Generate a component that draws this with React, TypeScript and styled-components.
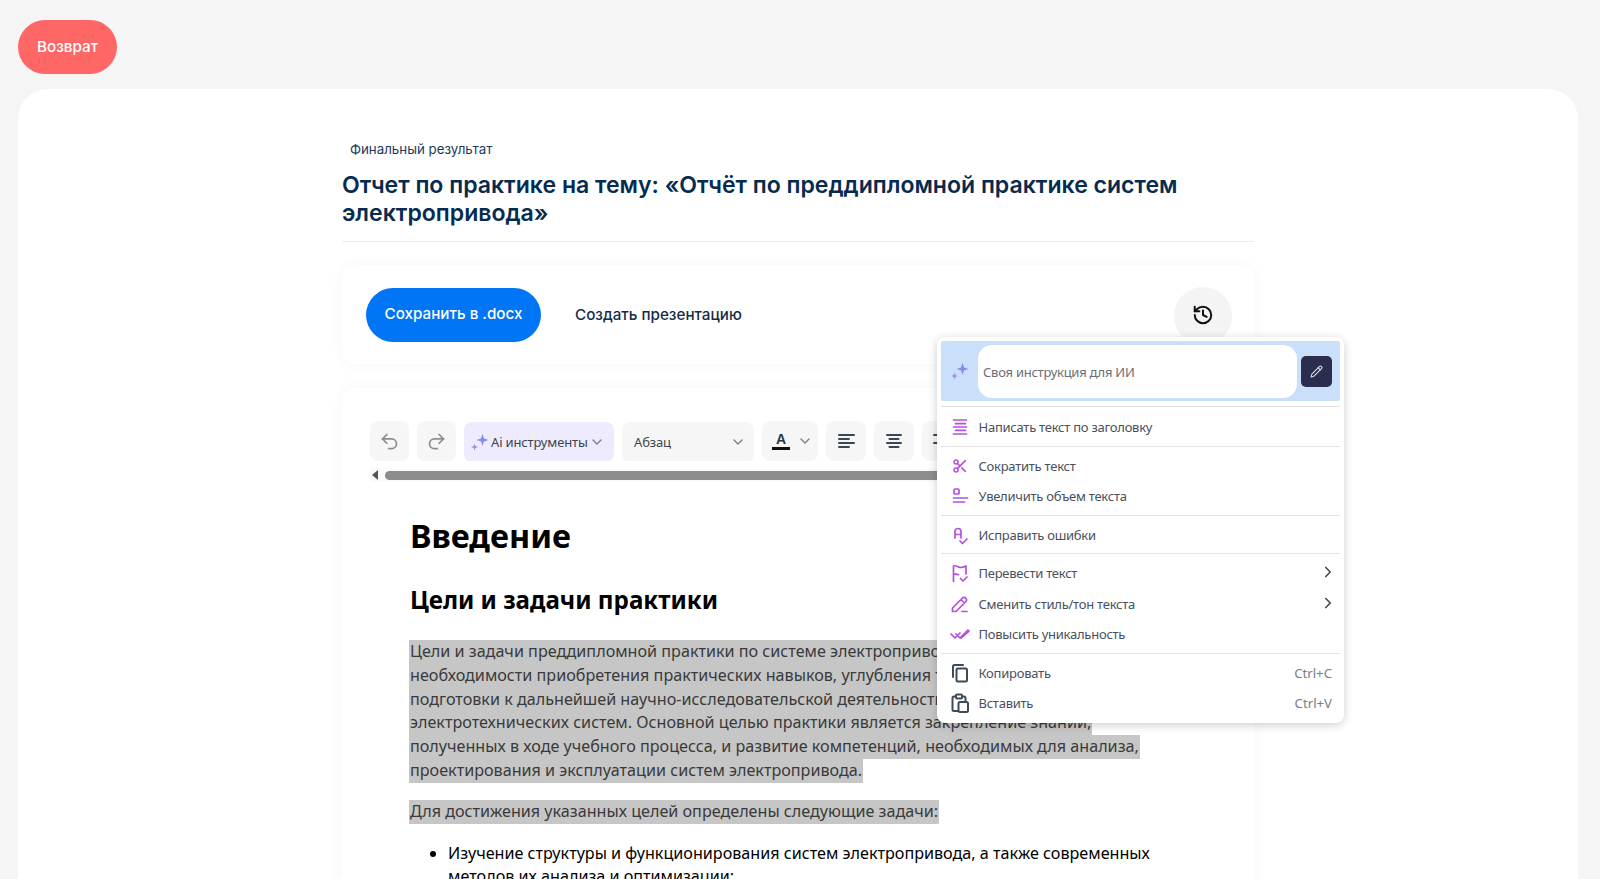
import React from "react";
import styled, { createGlobalStyle } from "styled-components";
import { ChevronDown, ChevronRight, History, Pencil, Redo2, Scissors, Undo2 } from "lucide-react";

const Global = createGlobalStyle`
  html, body { margin: 0; padding: 0; height: 100%; overflow: hidden; background: #f5f5f5; }
  body { font-family: Inter, "Liberation Sans", sans-serif; }
  * { box-sizing: border-box; }
`;

const Page = styled.div`
  position: relative;
  height: 879px;
  overflow: hidden;
  padding: 20px 22px 0 18px;
`;
const BackButton = styled.button`
  display: block;
  width: 99px;
  height: 54px;
  padding: 0 0 2px;
  border: 0;
  border-radius: 27px;
  background: #ff6666;
  color: #fff;
  font: 500 15.2px Inter, sans-serif;
`;
const Panel = styled.main`
  margin-top: 15px;
  height: 900px;
  background: #fff;
  border-radius: 30px;
  padding-top: 49px;
`;
const Column = styled.div`
  width: 912px;
  margin: 0 auto;
`;
const Header = styled.header`
  padding-bottom: 15px;
  border-bottom: 1px solid #ececec;
`;
const Eyebrow = styled.div`
  font-size: 13.3px;
  line-height: 20px;
  margin: 1px 0 11px 8px;
  color: #1b3a5c;
`;
const Title = styled.h1`
  margin: 0 0 -1px;
  padding-top: 1px;
  font-size: 23.05px;
  line-height: 28px;
  font-weight: 600;
  color: #062b50;
`;
const ActionCard = styled.section`
  margin-top: 23px;
  height: 99px;
  padding: 23px 22px 0 24px;
  display: flex;
  align-items: flex-start;
  background: #fff;
  border-radius: 12px;
  box-shadow: 0 0 16px rgba(0, 0, 0, 0.035);
`;
const SaveButton = styled.button`
  width: 175px;
  height: 54px;
  padding: 0 0 3px;
  border: 0;
  border-radius: 27px;
  background: #0075f5;
  color: #fff;
  font: 500 15.2px Inter, sans-serif;
`;
const PresentationLink = styled.span`
  margin-left: 34px;
  line-height: 53px;
  font-size: 15.2px;
  font-weight: 500;
  color: #152b45;
`;
const HistoryButton = styled.button`
  margin-left: auto;
  width: 58px;
  height: 58px;
  margin-top: -1px;
  padding: 0 0 2px;
  border: 0;
  border-radius: 50%;
  background: #f4f4f4;
  color: #111;
  display: flex;
  align-items: center;
  justify-content: center;
`;
const EditorCard = styled.section`
  margin-top: 24px;
  height: 600px;
  background: #fff;
  border-radius: 12px;
  box-shadow: 0 0 16px rgba(0, 0, 0, 0.035);
  padding: 33px 0 0 28px;
`;
const Toolbar = styled.div`
  display: flex;
  align-items: center;
  gap: 8px;
  height: 40px;
  overflow: hidden;
  font-family: "Noto Sans", sans-serif;
`;
const ToolButton = styled.div<{ $muted?: boolean; $width?: number }>`
  flex: none;
  width: ${(p) => p.$width ?? 40}px;
  height: 40px;
  border-radius: 8px;
  background: #f6f6f6;
  display: flex;
  align-items: center;
  justify-content: center;
  color: ${(p) => (p.$muted ? "#8b8f94" : "#3a4555")};
`;
const AiSelect = styled.div`
  flex: none;
  width: 150px;
  height: 40px;
  margin-top: 1px;
  border-radius: 8px;
  background: #edebfd;
  display: flex;
  align-items: center;
  padding-left: 6px;
  gap: 1px;
  font-size: 13px;
  letter-spacing: -0.15px;
  color: #3d4450;
`;
const ParagraphSelect = styled.div`
  flex: none;
  width: 132px;
  height: 40px;
  margin-top: 1px;
  border-radius: 8px;
  background: #f6f6f6;
  display: flex;
  align-items: center;
  justify-content: space-between;
  padding: 0 8px 0 12px;
  font-size: 13px;
  letter-spacing: -0.15px;
  color: #3d4450;
`;
const ColorSelect = styled.div`
  flex: none;
  width: 56px;
  height: 40px;
  border-radius: 8px;
  background: #f6f6f6;
  display: flex;
  align-items: center;
  justify-content: space-between;
  padding: 0 5px 0 10px;
`;
const ColorLetter = styled.span`
  display: block;
  width: 18px;
  border-bottom: 3px solid #111;
  text-align: center;
  font: 700 14px/15px "Liberation Sans", sans-serif;
  color: #2b3440;
`;
const ScrollTrack = styled.div`
  display: flex;
  align-items: center;
  height: 14px;
  margin-top: 7px;
  padding-left: 2px;
  background: #fafafa;
`;
const ScrollArrow = styled.span`
  width: 0;
  height: 0;
  border-top: 5px solid transparent;
  border-bottom: 5px solid transparent;
  border-right: 6px solid #555;
`;
const ScrollThumb = styled.span`
  flex: 1;
  height: 9px;
  margin-left: 7px;
  border-radius: 5px;
  background: #8c8c8c;
`;
const Doc = styled.article`
  padding: 31px 0 0 40px;
  font-family: "Noto Sans", sans-serif;
  color: #000;
`;
const H1 = styled.h2`
  margin: 0;
  font-size: 32.4px;
  line-height: 44px;
  font-weight: 700;
`;
const H2 = styled.h3`
  margin: 26px 0 0;
  font-size: 24.2px;
  line-height: 33px;
  font-weight: 700;
`;
const Paragraph = styled.div<{ $gap: number }>`
  margin-top: ${(p) => p.$gap}px;
`;
const SelectedLine = styled.span`
  display: block;
  width: fit-content;
  white-space: nowrap;
  margin-left: -1px;
  padding: 0 1px;
  height: 23.8px;
  font-size: 16.15px;
  line-height: 23.8px;
  background: #c6c6c6;
  color: #3a3a3a;
`;
const List = styled.ul`
  margin: 18px 0 0;
  padding-left: 38px;
  font-size: 16.15px;
  line-height: 23.8px;
`;
const Menu = styled.div`
  position: absolute;
  left: 937px;
  top: 337px;
  width: 407px;
  height: 386px;
  padding: 4px;
  background: #fff;
  border-radius: 8px;
  box-shadow: 0 2px 10px rgba(0, 0, 0, 0.2);
  font-family: "Noto Sans", sans-serif;
`;
const PromptRow = styled.div`
  height: 60px;
  background: #c9dffa;
  border-radius: 2px;
  display: flex;
  align-items: center;
  padding: 0 8px 0 9px;
`;
const PromptInput = styled.div`
  width: 319px;
  height: 53px;
  margin-left: 8px;
  padding-left: 5px;
  border-radius: 14px;
  background: #fff;
  color: #6b6e74;
  font-size: 13px;
  letter-spacing: -0.25px;
  line-height: 55px;
`;
const PromptButton = styled.div`
  width: 31px;
  height: 31px;
  margin-left: 4px;
  border-radius: 5px;
  background: #2b2d4f;
  color: #ddd;
  display: flex;
  align-items: center;
  justify-content: center;
`;
const Rule = styled.div<{ $top?: number; $bottom?: number }>`
  height: 1px;
  margin: ${(p) => p.$top ?? 3}px 0 ${(p) => p.$bottom ?? 4}px;
  background: #e2e2e2;
`;
const Item = styled.div`
  display: flex;
  align-items: center;
  height: 30.5px;
  padding: 0 8px 0 4px;
  font-size: 13px;
  letter-spacing: -0.25px;
  color: #4a4f5c;
`;
const ItemIcon = styled.span<{ $dark?: boolean }>`
  flex: none;
  width: 30px;
  height: 24px;
  margin-right: 3.5px;
  display: flex;
  align-items: center;
  justify-content: center;
  color: ${(p) => (p.$dark ? "#3f4a58" : "#b44fdc")};
`;
const Shortcut = styled.span`
  margin-left: auto;
  letter-spacing: 0;
  font-size: 13.2px;
  color: #7a7d84;
`;
const Arrow = styled.span`
  margin: -2px -5px 0 auto;
  display: flex;
  color: #3f4a58;
`;

const Sparkles = () => (
  <svg width="20" height="20" viewBox="0 0 20 20" fill="none">
    <defs>
      <linearGradient id="sparkleFill" x1="0" y1="1" x2="1" y2="0">
        <stop offset="0" stopColor="#a98ce8" />
        <stop offset="1" stopColor="#5f8ff0" />
      </linearGradient>
    </defs>
    <path d="M12.5 2 L14 6.5 L18.5 8 L14 9.5 L12.5 14 L11 9.5 L6.5 8 L11 6.5 Z" fill="url(#sparkleFill)" />
    <path d="M4.5 11.5 L5.4 14.1 L8 15 L5.4 15.9 L4.5 18.5 L3.6 15.9 L1 15 L3.6 14.1 Z" fill="#a98ce8" />
  </svg>
);

const Icon = ({ children, width = 1.7 }: { children: React.ReactNode; width?: number }) => (
  <svg width="20" height="20" viewBox="0 0 20 20" fill="none" stroke="currentColor" strokeWidth={width} strokeLinecap="round" strokeLinejoin="round">
    {children}
  </svg>
);

const AlignIcon = ({ d }: { d: string }) => (
  <svg width="20" height="20" viewBox="0 0 20 20" fill="none" stroke="currentColor" strokeWidth="2" strokeLinecap="round">
    <path d={d} />
  </svg>
);

export default function App() {
  return (
    <Page>
      <Global />
      <BackButton>Возврат</BackButton>
      <Panel>
        <Column>
          <Header>
            <Eyebrow>Финальный результат</Eyebrow>
            <Title>
              Отчет по практике на тему: «Отчёт по преддипломной практике систем
              <br />
              электропривода»
            </Title>
          </Header>
          <ActionCard>
            <SaveButton>Сохранить в .docx</SaveButton>
            <PresentationLink>Создать презентацию</PresentationLink>
            <HistoryButton>
              <History size={22} strokeWidth={2.2} />
            </HistoryButton>
          </ActionCard>
          <EditorCard>
            <Toolbar>
              <ToolButton $muted $width={39}><Undo2 size={21} /></ToolButton>
              <ToolButton $muted $width={39}><Redo2 size={21} /></ToolButton>
              <AiSelect>
                <Sparkles />
                Ai инструменты
                <ChevronDown size={16} color="#7b7f86" />
              </AiSelect>
              <ParagraphSelect>
                Абзац
                <ChevronDown size={16} color="#7b7f86" />
              </ParagraphSelect>
              <ColorSelect>
                <ColorLetter>A</ColorLetter>
                <ChevronDown size={16} color="#7b7f86" />
              </ColorSelect>
              <ToolButton><AlignIcon d="M3 4h15M3 8h10M3 12h15M3 16h10" /></ToolButton>
              <ToolButton><AlignIcon d="M3 4h14M5.5 8h9M3 12h14M5.5 16h9" /></ToolButton>
              <ToolButton><AlignIcon d="M2 4h15M7 8h10M2 12h15M7 16h10" /></ToolButton>
            </Toolbar>
            <ScrollTrack>
              <ScrollArrow />
              <ScrollThumb />
            </ScrollTrack>
            <Doc>
              <H1>Введение</H1>
              <H2>Цели и задачи практики</H2>
              <Paragraph $gap={24}>
                <SelectedLine>Цели и задачи преддипломной практики по системе электропривода обусловлены</SelectedLine>
                <SelectedLine>необходимости приобретения практических навыков, углубления теоретических знаний</SelectedLine>
                <SelectedLine>подготовки к дальнейшей научно-исследовательской деятельности в области</SelectedLine>
                <SelectedLine>электротехнических систем. Основной целью практики является закрепление знаний,</SelectedLine>
                <SelectedLine>полученных в ходе учебного процесса, и развитие компетенций, необходимых для анализа,</SelectedLine>
                <SelectedLine>проектирования и эксплуатации систем электропривода.</SelectedLine>
              </Paragraph>
              <Paragraph $gap={17}>
                <SelectedLine>Для достижения указанных целей определены следующие задачи:</SelectedLine>
              </Paragraph>
              <List>
                <li>
                  Изучение структуры и функционирования систем электропривода, а также современных
                  <br />
                  методов их анализа и оптимизации;
                </li>
              </List>
            </Doc>
          </EditorCard>
        </Column>
      </Panel>
      <Menu>
        <PromptRow>
          <Sparkles />
          <PromptInput>Своя инструкция для ИИ</PromptInput>
          <PromptButton><Pencil size={13} /></PromptButton>
        </PromptRow>
        <Rule $top={5} $bottom={5} />
        <Item>
          <ItemIcon>
            <Icon>
              <path d="M3.5 3h13M5.5 6.7h10M3.5 10h13M5.5 13.3h10M3.5 17h13" />
            </Icon>
          </ItemIcon>
          Написать текст по заголовку
        </Item>
        <Rule />
        <Item>
          <ItemIcon><Scissors size={16} strokeWidth={2.3} /></ItemIcon>
          Сократить текст
        </Item>
        <Item>
          <ItemIcon>
            <Icon>
              <rect x="4" y="3" width="5" height="5" rx="1" />
              <path d="M3.5 12h14M3.5 16h11" />
            </Icon>
          </ItemIcon>
          Увеличить объем текста
        </Item>
        <Rule />
        <Item>
          <ItemIcon>
            <Icon>
              <path d="M5 13V6.5a3 3 0 0 1 6 0V13M5 9.5h6M10 16l2.5 2.5L17 14" />
            </Icon>
          </ItemIcon>
          Исправить ошибки
        </Item>
        <Rule />
        <Item>
          <ItemIcon>
            <Icon>
              <path d="M3.5 18.5V3c2 -.8 3.5 .2 5 1s3.5 1 7.5 -1v8M3.5 11.5c2 -.8 3.5 -.4 5 .2M10.5 15.5l2.5 2.5 4 -4" />
            </Icon>
          </ItemIcon>
          Перевести текст
          <Arrow><ChevronRight size={18} strokeWidth={2.2} /></Arrow>
        </Item>
        <Item>
          <ItemIcon>
            <Icon>
              <path d="M2.5 17.5V14L12.5 4a2.5 2.5 0 0 1 3.5 3.5L6 17.5zM11 5.5L14.5 9M12 17.5h5" />
            </Icon>
          </ItemIcon>
          Сменить стиль/тон текста
          <Arrow><ChevronRight size={18} strokeWidth={2.2} /></Arrow>
        </Item>
        <Item>
          <ItemIcon>
            <Icon>
              <path d="M1 10l4 4 5-5M6 10l4 4 8-8M11 14l8-7" />
            </Icon>
          </ItemIcon>
          Повысить уникальность
        </Item>
        <Rule />
        <Item>
          <ItemIcon $dark>
            <Icon width={2}>
              <rect x="6.5" y="5.5" width="10.5" height="13" rx="1.5" />
              <path d="M3 14V3.5A1.5 1.5 0 0 1 4.5 2H13" />
            </Icon>
          </ItemIcon>
          Копировать
          <Shortcut>Ctrl+C</Shortcut>
        </Item>
        <Item>
          <ItemIcon $dark>
            <Icon width={2}>
              <path d="M8 18H4a1.5 1.5 0 0 1-1.5-1.5V5A1.5 1.5 0 0 1 4 3.5h2M12 3.5h2A1.5 1.5 0 0 1 15.5 5v3" />
              <rect x="6" y="1.5" width="6" height="4" rx="1" />
              <rect x="8.5" y="9" width="9.5" height="10" rx="1.5" />
            </Icon>
          </ItemIcon>
          Вставить
          <Shortcut>Ctrl+V</Shortcut>
        </Item>
      </Menu>
    </Page>
  );
}
